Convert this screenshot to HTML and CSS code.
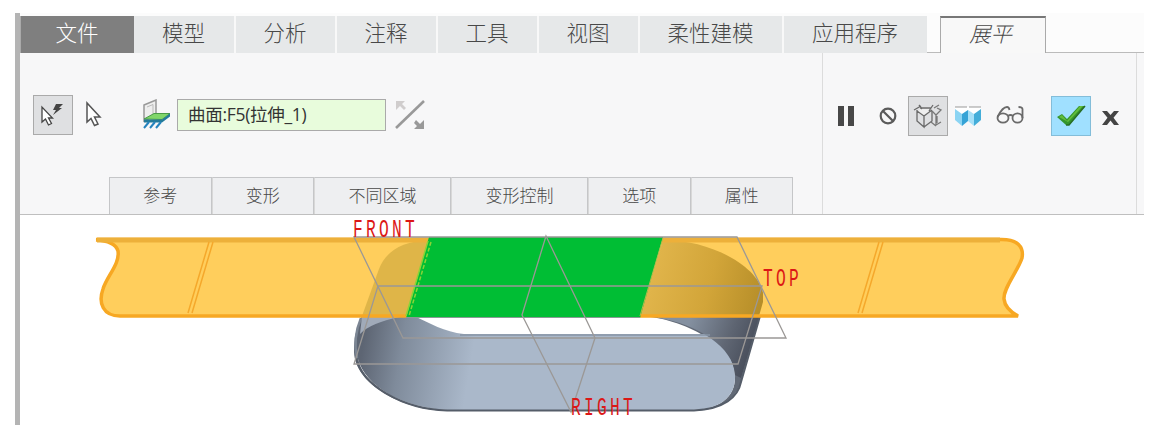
FILE: index.html
```html
<!DOCTYPE html>
<html lang="zh-CN">
<head>
    <meta charset="UTF-8">
    <meta name="viewport" content="width=device-width, initial-scale=1.0">
    <title>展平</title>
    <link rel="stylesheet" href="styles.css">
</head>
<body>
    <div class="app">
        <nav class="tabs">
            <a class="tab file">文件</a>
            <a class="tab">模型</a>
            <a class="tab">分析</a>
            <a class="tab">注释</a>
            <a class="tab">工具</a>
            <a class="tab">视图</a>
            <a class="tab wide">柔性建模</a>
            <a class="tab wide last">应用程序</a>
            <span class="gap"></span>
            <a class="tab active">展平</a>
            <span class="rest"></span>
        </nav>

        <div class="ribbon">
            <div class="dashboard">
                <div class="tools">
                    <button class="btn pressed">
                        <svg width="38" height="38" viewBox="0 0 38 38">
                            <path d="M8 11v15l3.500-3 3 6 3-1.500-3-5.500h4z" fill="#fff" stroke="#444" stroke-width="1.300"/>
                            <path d="M22 8h7l-4 4h3l-9 7 3-5h-3z" fill="#444"/>
                        </svg>
                    </button>
                    <button class="btn select">
                        <svg width="20" height="30" viewBox="0 0 20 30">
                            <path d="M4 3v19l4-3.500 3.500 7 3.500-1.500-3.500-7h5.500z" fill="#fff" stroke="#555" stroke-width="1.500"/>
                        </svg>
                    </button>
                    <svg class="surface" width="30" height="32" viewBox="0 0 30 32">
                        <path d="M2 6l12-5v15l-12 6z" fill="#eee" stroke="#999" stroke-width="1.500"/>
                        <path d="M5 8l6-2.500v12" fill="none" stroke="#bbb"/>
                        <path d="M2 20l10-5.500h16l-8 6z" fill="#80d66a" stroke="#4a9a48"/>
                        <path d="M2 20.500h18l8-6v3l-8 6h-18z" fill="#237b9a"/>
                        <path d="M7 23l-5 6M13 23l-5 6M19 23l-5 6" stroke="#2583be" stroke-width="2"/>
                    </svg>
                    <div class="collector">曲面:F5(拉伸_1)</div>
                    <svg class="flip" width="30" height="30" viewBox="0 0 30 30">
                        <path d="M1 28L29 1" stroke="#999" stroke-width="2.600"/>
                        <path d="M1 1h9l-3 3 4 4-2 2-4-4-4 4z" fill="#d0cdcd"/>
                        <path d="M29 29h-10l3-3-3-3 2-3 4 4 4-4z" fill="#999"/>
                    </svg>
                </div>
                <div class="panels">
                    <a>参考</a>
                    <a>变形</a>
                    <a class="long">不同区域</a>
                    <a class="long">变形控制</a>
                    <a>选项</a>
                    <a>属性</a>
                </div>
            </div>
            <div class="controls">
                <svg class="pause" width="16" height="20" viewBox="0 0 16 20">
                    <path d="M0 0h6v20H0zM10 0h6v20h-6z" fill="#484848"/>
                </svg>
                <svg class="stop" width="18" height="18" viewBox="0 0 18 18">
                    <circle cx="9" cy="9" r="7.300" fill="none" stroke="#5b5b5b" stroke-width="2.200"/>
                    <path d="M4 4l10 10" stroke="#5b5b5b" stroke-width="2.200"/>
                </svg>
                <button class="btn pressed">
                    <svg width="38" height="38" viewBox="0 0 38 38" fill="none" stroke="#6a6a6a" stroke-width="1.300">
                        <path d="M8 15l7 4 7-4V10l-9 0zM13 10h9" fill="#eee" stroke="none"/>
                        <path d="M5 13l7-4M10 8l3 4M8 13v11l7 6V19L8 14M15 19l8-6M15 30l8-6V14M11 11h11M20 14l4-6"/>
                        <path d="M23 14l4 4v10M27 18l5-5-4-2M27 28l5-3M28 19v7M22 25l5 4M25 11l5-3" stroke="#777"/>
                    </svg>
                </button>
                <svg class="shade" width="26" height="20" viewBox="0 0 26 20">
                    <path d="M0 1h26v3l-7 4-6-4-6 4-7-4z" fill="#fff"/>
                    <path d="M0 1h12M14 1h12" stroke="#999"/>
                    <path d="M0 3l7 5v12l-7-6z" fill="#8bd4f3"/>
                    <path d="M7 8l6-4v11l-6 5z" fill="#35a3d6"/>
                    <path d="M13 4l6 4v12l-6-5z" fill="#a6e0f8"/>
                    <path d="M19 8l7-5v11l-7 6z" fill="#43add9"/>
                </svg>
                <svg class="glasses" width="28" height="18" viewBox="0 0 28 18" fill="none" stroke="#6a6a6a" stroke-width="1.800">
                    <ellipse cx="7" cy="12" rx="5.500" ry="4.700"/>
                    <ellipse cx="21.500" cy="12" rx="5" ry="4.700"/>
                    <path d="M1.500 11C4 6 8 1 11 1q2 0 2.500 3M12 10q2.500-2 5 0M26.500 12V3q0-2-4-2"/>
                </svg>
                <button class="btn ok">
                    <svg width="38" height="38" viewBox="0 0 38 38">
                        <path d="M5 20l5-3 5 5L27 9h6L17 28h-3z" fill="#35962c"/>
                        <path d="M7 20l3-2 5 6L28 9h3L16 25z" fill="#62bd3c"/>
                        <path d="M14 28h3L33 9" fill="none" stroke="#276d24" stroke-width="1.500"/>
                    </svg>
                </button>
                <svg class="cancel" width="17" height="14" viewBox="0 0 17 14">
                    <path d="M0 0h5l3.500 4L12 0h5l-5.500 6.700L17 14h-5L8.500 9.500 5 14H0l5.500-7.300z" fill="#444"/>
                </svg>
            </div>
            <div class="side"></div>
        </div>

        <svg class="scene" width="1124" height="210" viewBox="20 215 1124 210">
            <defs>
                <linearGradient id="inner" gradientUnits="userSpaceOnUse" x1="362" y1="350" x2="470" y2="368">
                    <stop offset="0" stop-color="#5d6573"/>
                    <stop offset=".35" stop-color="#7f8b9b"/>
                    <stop offset="1" stop-color="#aab8ca"/>
                </linearGradient>
                <linearGradient id="wall" gradientUnits="userSpaceOnUse" x1="690" y1="320" x2="755" y2="345">
                    <stop offset="0" stop-color="#8490a0"/>
                    <stop offset=".6" stop-color="#5f6673"/>
                    <stop offset="1" stop-color="#484e5b"/>
                </linearGradient>
                <linearGradient id="goldWall" gradientUnits="userSpaceOnUse" x1="655" y1="270" x2="765" y2="298">
                    <stop offset="0" stop-color="#e0b44a"/>
                    <stop offset=".5" stop-color="#d2a539"/>
                    <stop offset="1" stop-color="#b58d28"/>
                </linearGradient>
            </defs>

            <!-- loop body -->
            <path d="M362 316C356 329 354 337 354 352C355 384 402 410 447 411H694C722 410 738 397 742 378L762 308L640 316C685 318 734 347 735 375C736 397 720 409 692 410H447C400 408 358 382 358 355Z" fill="#626a77"/>
            <path d="M362 316C357 330 356 341 358 359C365 386 403 408 447 410H692C720 409 736 397 735 375C734 358 724 345 709 334H464C444 332 430 323 414 316Z" fill="url(#inner)"/>
            <path d="M658 316H760L741 378L735 375C734 347 697 324 658 318Z" fill="url(#wall)"/>
            <path d="M760 316L741 382C738 397 724 409 694 410.500H447C402 409 362 385 356 358" fill="none" stroke="#555d69" stroke-width="2"/>
            <path d="M361 318C356 330 354 345 357 358" fill="none" stroke="#7b8593" stroke-width="2.500"/>
            <path d="M362 316L360 334Q370 323 400 317Z" fill="#a0aab9"/>
            <path d="M460 335H710" stroke="#8794a4" stroke-width="1.500"/>

            <!-- flattened strip -->
            <path d="M95 239H1000C1018 239 1024 247 1022 258C1018 271 1003 288 1004 299Q1005 309 1018 316H120C103 316 98 303 103 289C107 276 120 264 118 251Q115 241 95 239Z" fill="#ffce5c"/>
            <path d="M430 240C400 241 385 253 379 269L362 316H407Z" fill="#dfb548"/>
            <path d="M663 240C710 240 757 265 763 293V302L759 316H640Z" fill="url(#goldWall)"/>
            <path d="M96 239.500H1000C1018 239 1024 247 1022 258C1018 271 1003 288 1004 299Q1005 309 1018 316H120C103 316 98 303 103 289C107 276 120 264 118 251Q115 241 96 240" fill="none" stroke="#f7a823" stroke-width="3.500"/>
            <path d="M97 240H1000" stroke="#edb03a" stroke-width="5"/>
            <path d="M209 242L188 313M213 242L192 313M879 242L858 313M883 242L862 313" fill="none" stroke="#f5a82b" stroke-width="1.500"/>
            <path d="M429 237H663L640 318H406Z" fill="#00be34"/>
            <path d="M406 317.500H640" stroke="#8a9a94"/>
            <path d="M428 241L406 316" stroke="#8bd437" stroke-width="1.500"/>
            <path d="M431 242L409 316" stroke="#8bd437" stroke-width="1.500" stroke-dasharray="4 2"/>
            <path d="M663 238L640 316" stroke="#b5b94c"/>

            <!-- datum planes -->
            <g fill="none" stroke="#9b9896" stroke-width="1.300">
                <path d="M354 237H737L786 338H403Z"/>
                <path d="M378 286H762L738 364H354Z"/>
                <path d="M546 236L595 338L571 412L522 315Z"/>
            </g>
            <g class="labels">
                <text x="353" y="237" textLength="65" lengthAdjust="spacingAndGlyphs">FRONT</text>
                <text x="763" y="286" textLength="39" lengthAdjust="spacingAndGlyphs">TOP</text>
                <text x="571" y="415" textLength="65" lengthAdjust="spacingAndGlyphs">RIGHT</text>
            </g>
        </svg>
    </div>
</body>
</html>
```

FILE: styles.css
```css
* {
    box-sizing: border-box;
}
body {
    margin: 0;
    background: #fff;
    font-family: "Open Sans", "Noto Sans CJK SC", sans-serif;
    color: #484848;
    overflow: hidden;
}
.app {
    width: 1129px;
    height: 412px;
    margin: 13px 0 0 15px;
    border-left: 5px solid #b4b4b4;
}
.tabs {
    display: flex;
    height: 40px;
    padding-top: 3px;
    background: #fcfcfc;
}
.tab {
    width: 101px;
    padding-right: 1px;
    background: #e6e8e9;
    border-right: 2px solid #f8f8f8;
    font-size: 21.5px;
    font-weight: 300;
    line-height: 34px;
    text-align: center;
    white-space: nowrap;
}
.tab.file {
    width: 114px;
    background: #7f7f7f;
    border-right: 0;
    border-left: 1px solid #aaa;
    color: #fff;
}
.tab.file + .tab {
    width: 102px;
}
.tab.wide {
    width: 144px;
}
.tab.last {
    width: 143px;
    border: 0;
}
.gap {
    width: 13px;
    border-bottom: 1px solid #bbb;
}
.tab.active {
    width: 106px;
    padding-right: 5px;
    background: #f8f8f8;
    border: 1px solid #aaa;
    border-top: 2px solid #777;
    border-bottom: 0;
    font-style: italic;
    line-height: 31px;
}
.rest {
    flex: 1;
    border-bottom: 1px solid #bbb;
}
.ribbon {
    display: flex;
    height: 162px;
    background: #f7f7f8;
    border-bottom: 1px solid #bfbfbf;
}
.dashboard {
    display: flex;
    flex-direction: column;
    justify-content: space-between;
    width: 802px;
    padding-top: 42px;
}
.tools {
    display: flex;
    align-items: center;
    height: 40px;
    padding-left: 13px;
}
.btn {
    display: flex;
    align-items: center;
    justify-content: center;
    flex: none;
    padding: 0;
    border: 0;
    background: none;
}
.pressed,
.ok {
    width: 40px;
    height: 40px;
    background: #dfe0e2;
    border: 1px solid #aaa;
}
.select {
    margin-left: 10px;
}
.surface {
    margin-left: 39px;
}
.collector {
    width: 209px;
    height: 32px;
    margin-left: 5px;
    padding-left: 10px;
    background: #e8fcdc;
    border: 1px solid #aaa;
    font-size: 17.5px;
    line-height: 29px;
    letter-spacing: -0.3px;
    color: #333;
}
.flip {
    margin-left: 9px;
}
.panels {
    display: flex;
    height: 37px;
    margin-left: 89px;
}
.panels a {
    width: 102.5px;
    border: 1px solid #c5c6c8;
    border-bottom: 0;
    background: #eeeff1;
    font-size: 17px;
    font-weight: 300;
    line-height: 36px;
    text-align: center;
}
.panels a + a {
    border-left-color: #d8d8d8;
}
.panels .long {
    width: 137px;
}
.controls {
    display: flex;
    align-items: center;
    width: 315px;
    height: 161px;
    padding: 0 0 35px 15px;
    border-left: 1px solid #dcdcdc;
    border-right: 1px solid #dcdcdc;
}
.stop {
    margin: 0 11px 0 25px;
}
.shade {
    margin-left: 7px;
}
.glasses {
    margin: 0 27px 3px 15px;
}
.ok {
    background: #a0e0ff;
    border-color: #83bdd9;
}
.cancel {
    margin: 4px 0 0 11px;
}
.scene {
    display: block;
}
.labels text {
    fill: #dc1716;
    font-family: "Liberation Mono", monospace;
    font-size: 25px;
    letter-spacing: 5px;
}
```
